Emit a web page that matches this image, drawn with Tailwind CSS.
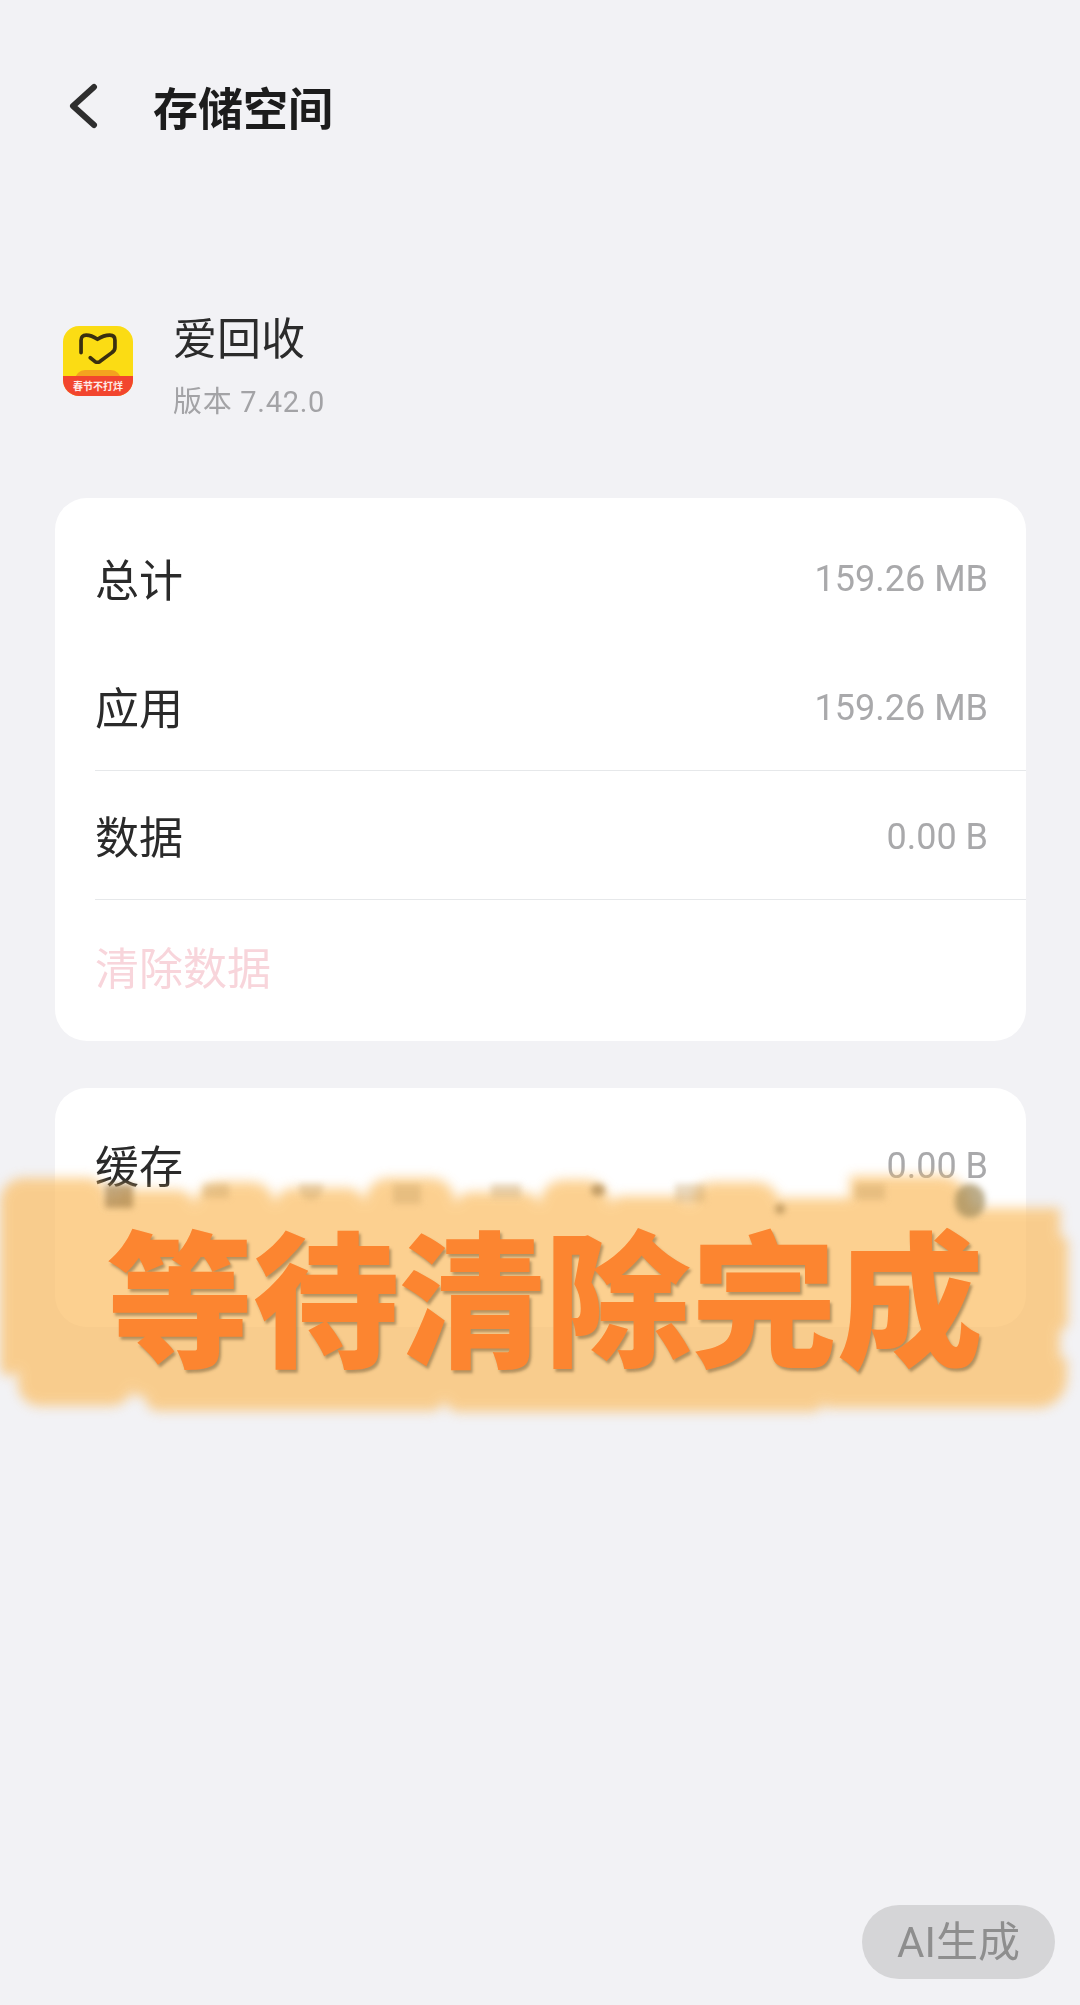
<!DOCTYPE html>
<html lang="zh-CN">
<head>
    <meta charset="UTF-8">
    <meta name="viewport" content="width=device-width, initial-scale=1.0">
    <title>存储空间</title>
    <script src="https://cdn.jsdelivr.net/npm/@tailwindcss/browser@4"></script>
</head>
<body class="overflow-hidden">
    <div class="relative w-[1080px] h-[2005px] overflow-hidden bg-[#f2f2f5] font-['Noto_Sans_CJK_SC','Noto_Sans',sans-serif]">

        <!-- Page content, slightly soft like the video frame -->
        <div class="blur-[0.7px]">
            <!-- Header -->
            <header class="flex items-center h-[212px] pl-[68px]">
                <svg class="w-[30px] h-[46px]" viewBox="0 0 30 46" fill="none" stroke="#2e2e2e" stroke-width="6" stroke-linecap="round" stroke-linejoin="round">
                    <path d="M26 4 L5 23 L26 42"/>
                </svg>
                <h1 class="ml-[55px] text-[45px] font-bold text-[#1c1c1c] leading-none">存储空间</h1>
            </header>

            <!-- App info -->
            <div class="flex items-center h-[286px] pl-[63px] pb-[8px] pt-[20px]">
                <div class="relative w-[70px] h-[70px] rounded-[16px] overflow-hidden bg-[#fbdc14]">
                    <svg class="absolute left-[16px] top-[7px] w-[38px] h-[31px]" viewBox="0 0 37 30" fill="none" stroke="#3a2f10" stroke-width="3.6" stroke-linecap="round" stroke-linejoin="round">
                        <path d="M2 19 V7 Q2 2 7 2 Q12 2 18 6 Q24 2 30 2 Q35 2 35 7 V14 Q35 17 32 19 L20 28 Q18 29 16 28 L11 24"/>
                    </svg>
                    <div class="absolute left-[12px] bottom-[16px] w-[46px] h-[10px] rounded-t-full bg-[#f4a21f]"></div>
                    <div class="absolute left-0 bottom-0 w-full h-[20px] bg-[#f2452e] text-[10px] leading-[20px] text-center text-white/90 font-bold">春节不打烊</div>
                </div>
                <div class="ml-[40px] mt-[4px]">
                    <div class="text-[44px] leading-[58px] text-[#2b2b2b]">爱回收</div>
                    <div class="mt-[19px] text-[29px] leading-[36px] text-[#a3a3a6] tracking-[0.7px] font-['Roboto','Noto_Sans_CJK_SC',sans-serif]">版本 7.42.0</div>
                </div>
            </div>

            <!-- Storage card -->
            <section class="mx-[55px] w-[971px] h-[543px] pt-[15px] pl-[40px] rounded-[32px] bg-white">
                <div class="flex items-center justify-between h-[129px] pr-[38px]">
                    <span class="text-[44px] text-[#2a2a2a]">总计</span>
                    <span class="mt-[3px] text-[36px] text-[#a9a9ab] font-['Roboto',sans-serif]">159.26 MB</span>
                </div>
                <div class="flex items-center justify-between h-[129px] pr-[38px] border-b border-[#e6e8ea]">
                    <span class="text-[44px] text-[#2a2a2a]">应用</span>
                    <span class="mt-[3px] text-[36px] text-[#a9a9ab] font-['Roboto',sans-serif]">159.26 MB</span>
                </div>
                <div class="flex items-center justify-between h-[129px] pr-[38px] border-b border-[#e6e8ea]">
                    <span class="text-[44px] text-[#2a2a2a]">数据</span>
                    <span class="mt-[3px] text-[36px] text-[#a9a9ab] font-['Roboto',sans-serif]">0.00 B</span>
                </div>
                <div class="flex items-center h-[132px]">
                    <span class="text-[44px] text-[#f8d5db]">清除数据</span>
                </div>
            </section>

            <!-- Cache card -->
            <section class="mt-[47px] mx-[55px] w-[971px] h-[239px] pt-[11px] pl-[40px] rounded-[32px] bg-white">
                <div class="flex items-center justify-between h-[129px] pr-[38px]">
                    <span class="text-[44px] text-[#2a2a2a]">缓存</span>
                    <span class="mt-[5px] text-[36px] text-[#a9a9ab] font-['Roboto',sans-serif]">0.00 B</span>
                </div>
            </section>
        </div>

        <!-- Orange brush banner over the cards -->
        <div class="absolute left-0 top-[1176px] w-[1072px] h-[236px] flex flex-col opacity-70 blur-[6px]">
            <div class="flex h-[32px] items-end">
                <div class="w-[110px] h-[30px] rounded-t-[24px] bg-[#fbbd62]"></div>
                <div class="w-[85px] h-[18px] rounded-t-[18px] bg-[#fbbd62]"></div>
                <div class="w-[80px] h-[26px] rounded-t-[24px] bg-[#fbbd62]"></div>
                <div class="w-[90px] h-[20px] rounded-t-[18px] bg-[#fbbd62]"></div>
                <div class="w-[90px] h-[30px] rounded-t-[24px] bg-[#fbbd62]"></div>
                <div class="w-[85px] h-[16px] rounded-t-[18px] bg-[#fbbd62]"></div>
                <div class="w-[70px] h-[28px] rounded-t-[24px] bg-[#fbbd62]"></div>
                <div class="w-[80px] h-[12px] rounded-t-[18px] bg-[#fbbd62]"></div>
                <div class="w-[90px] h-[26px] rounded-t-[24px] bg-[#fbbd62]"></div>
                <div class="w-[70px] h-[10px] bg-[#fbbd62]"></div>
                <div class="w-[122px] h-[32px] rounded-tr-[70px] bg-[#fbbd62]"></div>
            </div>
            <div class="flex h-[150px]">
                <div class="w-[1060px] bg-[#fbbd62]"></div>
                <div class="w-[8px] my-[28px] rounded-r-[10px] bg-[#fbbd62]"></div>
            </div>
            <div class="flex h-[54px] items-start">
                <div class="w-[18px] h-[18px] rounded-b-[10px] bg-[#fbbd62]"></div>
                <div class="w-[115px] h-[48px] rounded-b-[22px] bg-[#fbbd62]"></div>
                <div class="w-[12px] h-[38px] bg-[#fbbd62]"></div>
                <div class="w-[300px] h-[53px] rounded-b-[14px] bg-[#fbbd62]"></div>
                <div class="w-[380px] h-[54px] rounded-b-[14px] bg-[#fbbd62]"></div>
                <div class="w-[242px] h-[50px] rounded-br-[30px] bg-[#fbbd62]"></div>
            </div>
        </div>

        <!-- Leftover marks of the covered row -->
        <div class="absolute left-[105px] top-[1184px] w-[880px] flex items-start justify-between blur-[3px]">
            <div class="w-[28px] h-[24px] bg-[#a8854f]/70"></div>
            <div class="w-[26px] h-[14px] bg-[#c9a36a]/40"></div>
            <div class="w-[24px] h-[16px] rounded-b-full bg-[#c9a36a]/40"></div>
            <div class="w-[28px] h-[20px] bg-[#c9a36a]/40"></div>
            <div class="w-[30px] h-[14px] bg-[#c9a36a]/40"></div>
            <div class="w-[14px] h-[12px] rounded-full bg-[#a8854f]/70"></div>
            <div class="w-[30px] h-[18px] bg-[#c9a36a]/40"></div>
            <div class="w-[10px] h-[10px] mt-[20px] rounded-full bg-[#a8854f]/70"></div>
            <div class="w-[30px] h-[16px] bg-[#c9a36a]/40"></div>
            <div class="w-[30px] h-[34px] rounded-full bg-[#a08a5a]/70"></div>
        </div>

        <!-- Caption -->
        <div class="absolute left-0 top-[1192px] w-[1090px] text-center text-[146px] leading-[200px] font-black text-[#fc8530] [text-shadow:2px_3px_3px_rgba(90,70,40,0.45)]">等待清除完成</div>

        <!-- AI badge -->
        <div class="absolute right-[25px] top-[1905px] flex items-center justify-center w-[193px] h-[74px] rounded-full bg-[#d5d5d7] text-[42px] text-[#8e8e8e] blur-[0.5px] font-['Roboto','Noto_Sans_CJK_SC',sans-serif]">AI生成</div>
    </div>
</body>
</html>
